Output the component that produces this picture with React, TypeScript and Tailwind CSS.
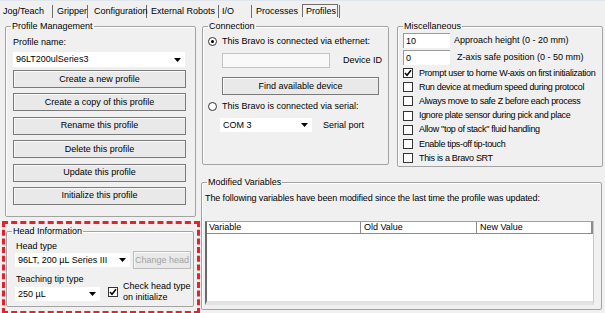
import React from "react";

const Arrow = () => (
  <svg width="7" height="4" viewBox="0 0 7 4" className="shrink-0">
    <path d="M0 0h7L3.5 4z" fill="#000" />
  </svg>
);

const Combo = ({ value, className = "" }: { value: string; className?: string }) => (
  <div className={`flex items-center justify-between bg-white pl-[3px] pr-[4px] ${className}`}>
    <span className="whitespace-nowrap">{value}</span>
    <Arrow />
  </div>
);

const Btn = ({ children, className = "", disabled }: { children: React.ReactNode; className?: string; disabled?: boolean }) => (
  <div
    className={`flex items-center justify-center border bg-[#e9e9e9] shadow-[inset_1px_1px_0_#fafafa] whitespace-nowrap ${
      disabled ? "border-[#bcbcbc] text-[#a3a3a3]" : "border-[#7a7a7a]"
    } ${className}`}
  >
    {children}
  </div>
);

const Check = ({ checked }: { checked?: boolean }) => (
  <div className="w-[10px] h-[10px] border border-[#333] bg-white flex items-center justify-center shrink-0">
    {checked && (
      <svg width="8" height="8" viewBox="0 0 8 8">
        <path d="M1 4l2 2.2L7 1.2" stroke="#000" strokeWidth="1.6" fill="none" />
      </svg>
    )}
  </div>
);

const Radio = ({ on }: { on?: boolean }) => (
  <div className="w-[9px] h-[9px] rounded-full border border-[#333] bg-white flex items-center justify-center shrink-0">
    {on && <div className="w-[3px] h-[3px] rounded-full bg-black" />}
  </div>
);

const Group = ({ title, className = "", children }: { title: string; className?: string; children: React.ReactNode }) => (
  <fieldset className={`border border-[#a3a3a3] rounded-[2px] shadow-[inset_1px_1px_0_#fff] ${className}`}>
    <legend className="ml-[5px] px-[1px] leading-[11px]">{title}</legend>
    {children}
  </fieldset>
);

const tabs = [
  { label: "Jog/Teach", w: "w-[53px] pl-[3px]" },
  { label: "Gripper", w: "w-[35px] pl-[4px]" },
  { label: "Configuration", w: "w-[59px] pl-[6px]" },
  { label: "External Robots", w: "w-[72px] pl-[4px]" },
  { label: "I/O", w: "w-[33px] pl-[3px]" },
];

const miscChecks = [
  { label: "Prompt user to home W-axis on first initialization", on: true },
  { label: "Run device at medium speed during protocol" },
  { label: "Always move to safe Z before each process" },
  { label: "Ignore plate sensor during pick and place" },
  { label: "Allow \"top of stack\" fluid handling" },
  { label: "Enable tips-off tip-touch" },
  { label: "This is a Bravo SRT" },
];

const profileButtons = [
  "Create a new profile",
  "Create a copy of this profile",
  "Rename this profile",
  "Delete this profile",
  "Update this profile",
  "Initialize this profile",
];

export default function App() {
  return (
    <div className="w-[605px] h-[313px] overflow-hidden bg-[#f0f0f0] text-black text-[9px] leading-[11px] font-['Liberation_Sans',Arial,sans-serif]">
      {/* tab strip */}
      <div className="h-[20px] flex items-start pt-[4px] border-t border-[#dfe6ee]">
        {tabs.map((t) => (
          <div key={t.label} className={`h-[13px] leading-[13px] border-r border-[#6e6e6e] whitespace-nowrap ${t.w}`}>
            {t.label}
          </div>
        ))}
        <div className="w-[50px] h-[13px] leading-[13px] pl-[4px]">Processes</div>
        <div className="h-[13px] -mt-[1px] w-[36px] leading-[12px] pl-[3px] border border-b-0 border-[#6e6e6e] bg-[#f4f4f4]">Profiles</div>
        <div className="ml-[1px] w-px h-[13px] bg-[#6e6e6e]" />
      </div>

      <div className="flex">
        {/* left column */}
        <div className="w-[201px] shrink-0">
          <Group title="Profile Management" className="ml-[5px] mt-[1px] w-[191px] h-[196px]">
            <div className="pl-[7px]">
              <div className="mt-[5px] leading-[11px]">Profile name:</div>
              <Combo value="96LT200ulSeries3" className="mt-[4px] w-[172px] h-[15px]" />
              <div className="mt-[3px] flex flex-col gap-[5.4px]">
                {profileButtons.map((b) => (
                  <Btn key={b} className="w-[173px] h-[18px]">
                    {b}
                  </Btn>
                ))}
              </div>
            </div>
          </Group>

          <div className="ml-[2px] mt-[4px] w-[198px] h-[93px] border-[3px] border-dashed border-[#e8202a]">
            <Group title="Head Information" className="ml-[1px] mt-[2px] w-[188px] h-[81px]">
              <div className="pl-[8px]">
                <div className="mt-[4px] ml-[1px] leading-[10px]">Head type</div>
                <div className="flex items-center gap-[3px]">
                  <Combo value="96LT, 200 µL Series III" className="w-[115px] h-[14px]" />
                  <Btn disabled className="w-[58px] h-[18px]">
                    Change head
                  </Btn>
                </div>
                <div className="flex">
                  <div>
                    <div className="mt-[5px] ml-[1px] leading-[10px]">Teaching tip type</div>
                    <Combo value="250 µL" className="mt-[3px] w-[85px] h-[14px]" />
                  </div>
                  <div className="self-end -mb-[2px] ml-[8px] flex items-start gap-[5px]">
                    <div className="mt-[6px]">
                      <Check checked />
                    </div>
                    <div className="leading-[11px]">
                      Check head type
                      <br />
                      on initialize
                    </div>
                  </div>
                </div>
              </div>
            </Group>
          </div>
        </div>

        {/* right area */}
        <div className="flex-1">
          <div className="flex items-start">
            <Group title="Connection" className="ml-[1px] mt-[1px] w-[187px] h-[144px]">
              <div className="pl-[5px]">
                <div className="mt-[3px] h-[12px] flex items-center gap-[5px]">
                  <Radio on />
                  <span>This Bravo is connected via ethernet:</span>
                </div>
                <div className="mt-[6px] ml-[14px] flex items-center">
                  <div className="w-[108px] h-[15px] bg-[#f9f9f9] border border-[#c2c2c2]" />
                  <span className="ml-[13px]">Device ID</span>
                </div>
                <Btn className="mt-[9px] ml-[14px] w-[157px] h-[18px]">Find available device</Btn>
                <div className="mt-[5px] h-[12px] flex items-center gap-[5px]">
                  <Radio />
                  <span>This Bravo is connected via serial:</span>
                </div>
                <div className="mt-[6px] ml-[12px] flex items-center">
                  <Combo value="COM 3" className="w-[92px] h-[14px]" />
                  <span className="ml-[11px]">Serial port</span>
                </div>
              </div>
            </Group>

            <Group title="Miscellaneous" className="ml-[8px] mt-[1px] w-[206px] h-[146px]">
              <div className="pl-[5px]">
                <div className="mt-[1px] flex items-center">
                  <div className="w-[47px] h-[15px] bg-white border-t border-l border-[#9a9a9a] pl-[2px] leading-[14px]">10</div>
                  <span className="ml-[4px]">Approach height (0 - 20 mm)</span>
                </div>
                <div className="mt-[2px] flex items-center">
                  <div className="w-[47px] h-[15px] bg-white border-t border-l border-[#9a9a9a] pl-[2px] leading-[14px]">0</div>
                  <span className="ml-[7px]">Z-axis safe position (0 - 50 mm)</span>
                </div>
                <div className="mt-[1px]">
                  {miscChecks.map((c) => (
                    <div key={c.label} className="h-[14.2px] flex items-center gap-[6px]">
                      <Check checked={c.on} />
                      <span className="whitespace-nowrap tracking-[-0.32px]">{c.label}</span>
                    </div>
                  ))}
                </div>
              </div>
            </Group>
          </div>

          <Group title="Modified Variables" className="mt-[10px] w-[401px] h-[133px]">
            <div className="pl-[3px]">
              <div className="mt-[4px] text-[9px] tracking-[-0.12px] leading-[12px] whitespace-nowrap">
                The following variables have been modified since the last time the profile was updated:
              </div>
              <div className="mt-[17px] w-[389px] h-[84px] bg-white border-l-2 border-t border-l-[#6a6a6a] border-t-[#a0a0a0] border-r border-r-[#c8c8c8] border-b-[4px] border-b-[#e2e2e2]">
                <div className="flex h-[12px] leading-[11px] border-b border-[#8c8c8c]">
                  <div className="w-[154px] pl-[2px] border-r border-[#8c8c8c]">Variable</div>
                  <div className="w-[116px] pl-[3px] border-r border-[#8c8c8c]">Old Value</div>
                  <div className="w-[116px] pl-[3px] border-r-2 border-[#8c8c8c]">New Value</div>
                </div>
              </div>
            </div>
          </Group>
        </div>
      </div>
    </div>
  );
}
